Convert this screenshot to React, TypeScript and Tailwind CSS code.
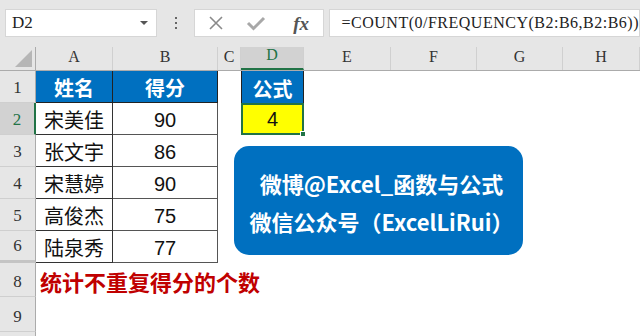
const serif = "font-['Liberation_Serif',serif]";
const cjk = "font-['Noto_Sans_CJK_SC','Noto_Sans',sans-serif]";
const arial = "font-['Liberation_Sans',Arial,sans-serif]";

const rows = [
  { n: "2", name: "宋美佳", score: "90" },
  { n: "3", name: "张文宇", score: "86" },
  { n: "4", name: "宋慧婷", score: "90" },
  { n: "5", name: "高俊杰", score: "75" },
  { n: "6", name: "陆泉秀", score: "77" },
];

function ColHead({ w, label, active }: { w: string; label: string; active?: boolean }) {
  return (
    <div
      className={`${w} h-full flex items-end justify-center pb-[1px] text-[16px] ${serif} border-r border-[#d0d0d0] ${
        active ? "bg-[#d2d2d2] text-[#217346] border-b-2 border-b-[#217346]" : "text-[#333]"
      }`}
    >
      {label}
    </div>
  );
}

function RowHead({ n, h, active, thick }: { n: string; h: string; active?: boolean; thick?: boolean }) {
  return (
    <div
      className={`w-[36px] ${h} shrink-0 flex items-end justify-center pb-[2px] text-[17px] ${serif} ${
        thick ? "border-b-[3px] border-b-[#c4c4c4]" : "border-b border-b-[#cfcfcf]"
      } ${
        active
          ? "bg-[#d2d2d2] text-[#217346] border-r-2 border-r-[#217346]"
          : "bg-[#e6e6e6] text-[#333] border-r border-r-[#ababab]"
      }`}
    >
      {n}
    </div>
  );
}

export default function App() {
  return (
    <div className="relative w-[640px] h-[336px] overflow-hidden bg-white">
      {/* formula bar */}
      <div className="h-[47px] bg-[#e6e6e6] flex items-start pt-[9px]">
        <div className="ml-[5px] w-[153px] h-[28px] bg-white border border-[#d6d6d6] flex items-center pl-[6px] pr-[8px]">
          <span className={`${serif} text-[17px] text-[#222]`}>D2</span>
          <span className="ml-auto w-0 h-0 border-l-[4px] border-r-[4px] border-t-[4px] border-l-transparent border-r-transparent border-t-[#555]" />
        </div>
        <div className="w-[37px] h-[28px] flex flex-col items-center justify-center gap-[3px]">
          <span className="w-[2px] h-[2px] bg-[#666]" />
          <span className="w-[2px] h-[2px] bg-[#666]" />
          <span className="w-[2px] h-[2px] bg-[#666]" />
        </div>
        <div className="w-[130px] h-[28px] bg-white border border-[#d6d6d6] flex items-center">
          <svg width="16" height="16" viewBox="0 0 16 16" className="ml-[13px]">
            <path d="M2 2 L14 14 M14 2 L2 14" stroke="#8a8a8a" strokeWidth="1.6" fill="none" />
          </svg>
          <svg width="20" height="16" viewBox="0 0 20 16" className="ml-[22px]">
            <path d="M2 8 L7.5 13.5 L18 3" stroke="#a8a8a8" strokeWidth="3" fill="none" />
          </svg>
          <span className={`ml-[27px] ${serif} italic text-[19px] text-[#555] font-bold leading-none`}>fx</span>
        </div>
        <div className="ml-[5px] flex-1 h-[28px] bg-white border border-[#d6d6d6] flex items-center pl-[12px]">
          <span className={`${serif} text-[16px] text-[#222] tracking-[0.5px]`}>
            =COUNT(0/FREQUENCY(B2:B6,B2:B6))
          </span>
        </div>
      </div>

      {/* column headers */}
      <div className="h-[24px] flex bg-[#e6e6e6] border-b border-[#ababab]">
        <div className="w-[36px] h-full flex items-end justify-end pr-[3px] pb-[3px] border-r border-[#ababab]">
          <svg width="17" height="17" viewBox="0 0 17 17">
            <path d="M17 0 L17 17 L0 17 Z" fill="#b6b6b6" />
          </svg>
        </div>
        <ColHead w="w-[77px]" label="A" />
        <ColHead w="w-[105px]" label="B" />
        <ColHead w="w-[23px]" label="C" />
        <ColHead w="w-[63px]" label="D" active />
        <ColHead w="w-[87px]" label="E" />
        <ColHead w="w-[86px]" label="F" />
        <ColHead w="w-[86px]" label="G" />
        <ColHead w="w-[77px]" label="H" />
      </div>

      {/* row 1 */}
      <div className="flex h-[32px]">
        <RowHead n="1" h="h-[32px]" />
        <div className={`w-[77px] bg-[#0070c0] border-r border-b border-[#222] flex items-center justify-center pt-[3px] text-white font-bold text-[20px] ${cjk}`}>
          姓名
        </div>
        <div className={`w-[105px] bg-[#0070c0] border-r border-b border-[#222] flex items-center justify-center pt-[3px] text-white font-bold text-[20px] ${cjk}`}>
          得分
        </div>
        <div className="w-[23px]" />
        <div className={`w-[63px] bg-[#0070c0] border-l border-r border-[#222] flex items-center justify-center pt-[3px] text-white font-bold text-[20px] ${cjk}`}>
          公式
        </div>
      </div>

      {/* rows 2-6 */}
      {rows.map((r) => (
        <div key={r.n} className="flex h-[32px]">
          <RowHead n={r.n} h="h-[32px]" active={r.n === "2"} thick={r.n === "6"} />
          <div className={`w-[77px] border-r border-b border-[#333] flex items-center pl-[8px] pt-[2px] text-[20px] text-[#111] ${cjk}`}>
            {r.name}
          </div>
          <div className={`w-[105px] border-r border-b border-[#555] flex items-center justify-center pt-[2px] text-[20px] text-[#111] ${arial}`}>
            {r.score}
          </div>
          <div className="w-[23px]" />
          {r.n === "2" && (
            <div className={`relative w-[63px] bg-[#ffff00] border-2 border-[#217346] flex items-center justify-center text-[20px] text-[#111] ${arial}`}>
              4
              <span className="absolute -right-[4px] -bottom-[4px] w-[6px] h-[6px] bg-[#217346] border border-white" />
            </div>
          )}
        </div>
      ))}

      {/* row 8 */}
      <div className="flex h-[34px]">
        <RowHead n="8" h="h-[34px]" />
        <div className={`pl-[4px] flex items-center pt-[2px] whitespace-nowrap text-[22px] font-bold text-[#c00000] ${cjk}`}>
          统计不重复得分的个数
        </div>
      </div>

      {/* row 9 */}
      <div className="flex h-[35px]">
        <RowHead n="9" h="h-[35px]" />
      </div>
      <div className="flex h-[10px]">
        <RowHead n="" h="h-[10px]" />
      </div>

      {/* floating text box */}
      <div
        className={`absolute left-[234px] top-[146px] w-[289px] h-[109px] rounded-[15px] bg-[#0070c0] flex flex-col items-center justify-center gap-[8px] pl-[6px] pt-[2px] text-white font-bold text-[22px] leading-[30px] ${cjk}`}
      >
        <div>微博@Excel_函数与公式</div>
        <div>微信公众号（ExcelLiRui）</div>
      </div>
    </div>
  );
}
